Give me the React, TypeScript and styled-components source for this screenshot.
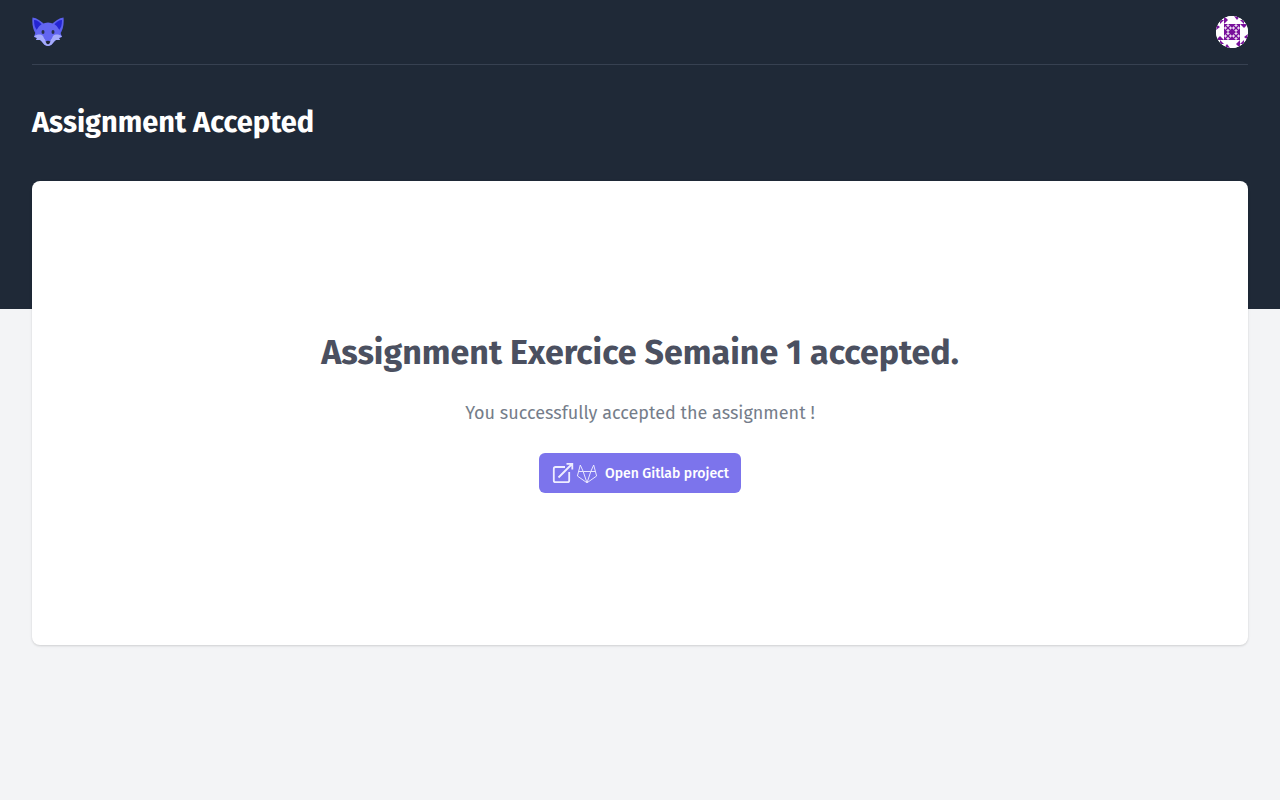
import React from "react";
import styled, { createGlobalStyle } from "styled-components";

const GlobalStyle = createGlobalStyle`
  *, *::before, *::after { box-sizing: border-box; }
  body {
    margin: 0;
    background: #f3f4f6;
    color: #4b5060;
    font-family: "Fira Sans", "Noto Sans", sans-serif;
  }
`;

const Banner = styled.div`
  padding: 0 32px 128px;
  background: #1f2937;
`;

const Nav = styled.nav`
  display: flex;
  align-items: center;
  justify-content: space-between;
  height: 65px;
  border-bottom: 1px solid #374151;
`;

const HomeLink = styled.a`
  display: block;
  height: 32px;
`;

const AvatarButton = styled.button`
  width: 32px;
  height: 32px;
  padding: 0;
  border: 0;
  border-radius: 50%;
  overflow: hidden;
  background: #fff;
  cursor: pointer;
`;

const Icon = styled.svg<{ $size: number }>`
  display: block;
  flex: none;
  width: ${(p) => p.$size}px;
  height: ${(p) => p.$size}px;
`;

const PageHeader = styled.header`
  padding: 40px 0;
`;

const PageTitle = styled.h1`
  margin: 0;
  color: #fff;
  font-size: 29px;
  line-height: 36px;
  font-weight: 700;
`;

const Main = styled.main`
  margin-top: -128px;
  padding: 0 32px 48px;
`;

const Card = styled.section`
  display: flex;
  flex-direction: column;
  align-items: center;
  padding: 152px 24px;
  border-radius: 8px;
  background: #fff;
  box-shadow: 0 1px 3px rgba(0, 0, 0, 0.1), 0 1px 2px rgba(0, 0, 0, 0.06);
  text-align: center;
`;

const CardTitle = styled.h2`
  margin: 0;
  color: #4b5060;
  font-size: 34px;
  line-height: 40px;
  font-weight: 700;
`;

const CardText = styled.p`
  margin: 26px 0;
  color: #757d8a;
  font-size: 18px;
  line-height: 28px;
`;

const ProjectLink = styled.a`
  display: flex;
  align-items: center;
  padding: 9px 12px 7px;
  border-radius: 6px;
  background: #7c74ec;
  color: #fff;
  font-size: 14px;
  line-height: 20px;
  font-weight: 500;
  text-decoration: none;
`;

const LinkLabel = styled.span`
  margin-left: 6px;
`;

function FoxLogo() {
  return (
    <Icon $size={32} viewBox="0 0 32 32" aria-hidden="true">
      <path d="M.5 1.5C-.2 8 1 14 4 18L13 9C9 5 5 2 .5 1.5Z" fill="#5b60ee" />
      <path d="M31.5 1.5C32.2 8 31 14 28 18L19 9C23 5 27 2 31.5 1.5Z" fill="#5b60ee" />
      <path d="M2 4C2 9 3 12 5 14L10 9C8 6 5 4 2 4Z" fill="#2424d2" />
      <path d="M30 4C30 9 29 12 27 14L22 9C24 6 27 4 30 4Z" fill="#2424d2" />
      <path d="M10 8Q16 5 22 8C26 10 28 15 30 21L27 22L28 24L24 24C21 26 20 30 16 30S11 26 8 24L4 24L5 22L2 21C4 15 6 10 10 8Z" fill="#6366f1" />
      <path d="M2 20.5C5 18 9 18 11 20C12 22 12 23 14 24H18C20 23 20 22 21 20C23 18 27 18 30 20.5L27 22L28 24L24 24C21 26 20 30 16 30S11 26 8 24L4 24L5 22Z" fill="#a5abfb" />
      <path d="M12 19H20L18.5 25H13.5Z" fill="#6366f1" />
      <ellipse cx="11" cy="16" rx="1.5" ry="2" fill="#28304b" />
      <ellipse cx="21" cy="16" rx="1.5" ry="2" fill="#28304b" />
      <path d="M13.5 25.5Q16 24 18.5 25.5Q17.5 28.2 16 28.2T13.5 25.5Z" fill="#202536" />
    </Icon>
  );
}

function Identicon() {
  const tiles = [[8, 8], [16, 8], [8, 16], [16, 16]];
  return (
    <Icon $size={32} viewBox="0 0 32 32" aria-hidden="true">
      <path fill="#fff" d="M0 0h32v32H0z" />
      {[0, 90, 180, 270].map((angle) => (
        <g key={angle} transform={`rotate(${angle} 16 16)`} fill="#78109b">
          <path d="M8 0L12 4L8 8ZM18 0H24L21 4ZM4 4L8 4L4 8Z" />
        </g>
      ))}
      {tiles.map(([x, y]) => (
        <g key={`${x}-${y}`} transform={`translate(${x} ${y})`}>
          <path fill="#78109b" d="M0 0h8v8H0z" />
          <path fill="#fff" fillOpacity=".85" d="M4 0L5.8 1.5L4 3L2.2 1.5ZM4 5L5.8 6.5L4 8L2.2 6.5ZM0 4L1.5 2.2L3 4L1.5 5.8ZM5 4L6.5 2.2L8 4L6.5 5.8Z" />
        </g>
      ))}
    </Icon>
  );
}

function ExternalIcon() {
  return (
    <Icon $size={24} viewBox="0 0 24 24" fill="none" stroke="#eeedff" strokeWidth="1.8" aria-hidden="true">
      <path d="M14 5H4.5Q2.8 5 2.8 6.7V18.5Q2.8 20.2 4.5 20.2H16.5Q18.2 20.2 18.2 18.5V10" />
      <path d="M7.5 15.5L21 2M15.5 1.9H21.3V7.5" />
    </Icon>
  );
}

function GitlabIcon() {
  return (
    <Icon $size={24} viewBox="0 0 24 24" fill="none" stroke="#e8e6ff" strokeLinejoin="round" aria-hidden="true">
      <path d="M12 20.8L2.4 14L5.3 3L8.2 9.5H15.8L18.7 3L21.6 14ZM8.2 9.5L12 20.8L15.8 9.5M3.6 9.5H8.2M15.8 9.5H20.4" strokeWidth="1" />
    </Icon>
  );
}

export default function App() {
  return (
    <>
      <GlobalStyle />
      <Banner>
        <Nav>
          <HomeLink href="#" aria-label="Home">
            <FoxLogo />
          </HomeLink>
          <AvatarButton type="button" aria-label="User menu">
            <Identicon />
          </AvatarButton>
        </Nav>
        <PageHeader>
          <PageTitle>Assignment Accepted</PageTitle>
        </PageHeader>
      </Banner>
      <Main>
        <Card>
          <CardTitle>Assignment Exercice Semaine 1 accepted.</CardTitle>
          <CardText>You successfully accepted the assignment !</CardText>
          <ProjectLink href="#">
            <ExternalIcon />
            <GitlabIcon />
            <LinkLabel>Open Gitlab project</LinkLabel>
          </ProjectLink>
        </Card>
      </Main>
    </>
  );
}
